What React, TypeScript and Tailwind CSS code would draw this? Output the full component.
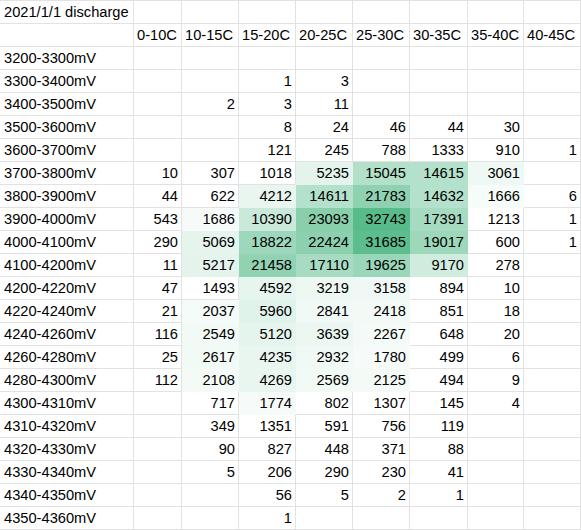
import React from "react";

const headers = ["0-10C", "10-15C", "15-20C", "20-25C", "25-30C", "30-35C", "35-40C", "40-45C"];

type Row = [string, (number | null)[]];
const _ = null;
const rows: Row[] = [
  ["3200-3300mV", []],
  ["3300-3400mV", [_, _, 1, 3]],
  ["3400-3500mV", [_, 2, 3, 11]],
  ["3500-3600mV", [_, _, 8, 24, 46, 44, 30]],
  ["3600-3700mV", [_, _, 121, 245, 788, 1333, 910, 1]],
  ["3700-3800mV", [10, 307, 1018, 5235, 15045, 14615, 3061]],
  ["3800-3900mV", [44, 622, 4212, 14611, 21783, 14632, 1666, 6]],
  ["3900-4000mV", [543, 1686, 10390, 23093, 32743, 17391, 1213, 1]],
  ["4000-4100mV", [290, 5069, 18822, 22424, 31685, 19017, 600, 1]],
  ["4100-4200mV", [11, 5217, 21458, 17110, 19625, 9170, 278]],
  ["4200-4220mV", [47, 1493, 4592, 3219, 3158, 894, 10]],
  ["4220-4240mV", [21, 2037, 5960, 2841, 2418, 851, 18]],
  ["4240-4260mV", [116, 2549, 5120, 3639, 2267, 648, 20]],
  ["4260-4280mV", [25, 2617, 4235, 2932, 1780, 499, 6]],
  ["4280-4300mV", [112, 2108, 4269, 2569, 2125, 494, 9]],
  ["4300-4310mV", [_, 717, 1774, 802, 1307, 145, 4]],
  ["4310-4320mV", [_, 349, 1351, 591, 756, 119]],
  ["4320-4330mV", [_, 90, 827, 448, 371, 88]],
  ["4330-4340mV", [_, 5, 206, 290, 230, 41]],
  ["4340-4350mV", [_, _, 56, 5, 2, 1]],
  ["4350-4360mV", [_, _, 1]],
];

const MAX = 32743;

function fill(v: number | null): string | null {
  if (v === null || v < 1600) return null;
  const t = v / MAX;
  const r = Math.round(255 + (87 - 255) * t);
  const g = Math.round(255 + (187 - 255) * t);
  const b = Math.round(255 + (138 - 255) * t);
  return `rgb(${r},${g},${b})`;
}

const cellBase =
  "h-[23px] border-r border-b border-[#e2e2e2] flex items-end pb-[2px] leading-[17px] whitespace-nowrap overflow-visible";

export default function App() {
  return (
    <div
      className="w-[581px] h-[530px] bg-white text-black text-[14.67px] border-t border-[#e2e2e2] overflow-hidden"
      style={{ fontFamily: '"Liberation Sans", Arial, sans-serif' }}
    >
      <div className="grid grid-cols-[134px_48px_57px_57px_57px_57px_58px_56px_57px]">
        <div className={`${cellBase} pl-[4px]`}>2021/1/1 discharge</div>
        {headers.map((h) => (
          <div key={"e" + h} className={cellBase} />
        ))}
        <div className={cellBase} />
        {headers.map((h) => (
          <div key={h} className={`${cellBase} pl-[3px]`}>
            {h}
          </div>
        ))}
        {rows.map(([label, vals]) => (
          <React.Fragment key={label}>
            <div className={`${cellBase} pl-[4px]`}>{label}</div>
            {headers.map((h, i) => {
              const v = i < vals.length ? vals[i] : null;
              const bg = fill(v);
              return (
                <div
                  key={label + h}
                  className={`${cellBase} justify-end pr-[3px]`}
                  style={bg ? { backgroundColor: bg, borderColor: bg } : undefined}
                >
                  {v ?? ""}
                </div>
              );
            })}
          </React.Fragment>
        ))}
      </div>
    </div>
  );
}
